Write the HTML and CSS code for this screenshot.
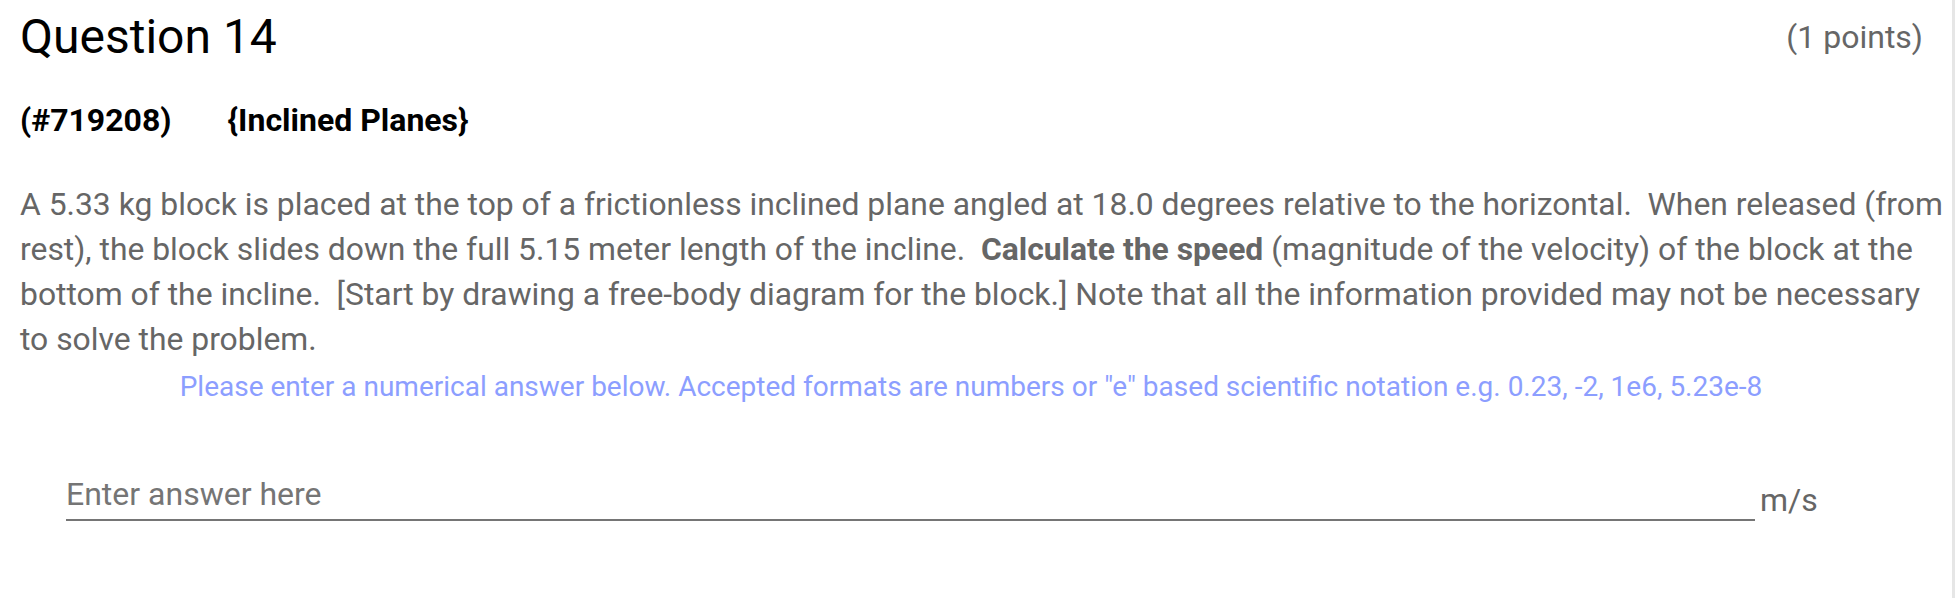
FILE: index.html
```html
<!DOCTYPE html>
<html lang="en">
<head>
<meta charset="utf-8">
<title>Question 14</title>
<link rel="stylesheet" href="styles.css">
</head>
<body>
<div class="page">
  <div class="question-header">
    <h1 class="question-title">Question 14</h1>
    <span class="question-points">(1 points)</span>
  </div>
  <div class="question-meta">
    <span class="meta-id">(#719208)</span>
    <span class="meta-topic">{Inclined Planes}</span>
  </div>
  <p class="question-text">A 5.33 kg block is placed at the top of a frictionless inclined plane angled at 18.0 degrees relative to the horizontal.&nbsp; When released (from rest), the block slides down the full 5.15 meter length of the incline.&nbsp; <b>Calculate the speed</b> (magnitude of the velocity) of the block at the bottom of the incline.&nbsp; [Start by drawing a free-body diagram for the block.] Note that all the information provided may not be necessary to solve the problem.</p>
  <p class="answer-hint">Please enter a numerical answer below. Accepted formats are numbers or "e" based scientific notation e.g. 0.23, -2, 1e6, 5.23e-8</p>
  <div class="answer-row">
    <input class="answer-input" type="text" placeholder="Enter answer here">
    <span class="answer-unit">m/s</span>
  </div>
</div>
</body>
</html>
```

FILE: styles.css
```css
html, body {
  margin: 0;
  padding: 0;
  background: #ffffff;
}

body {
  font-family: Roboto, "Noto Sans", sans-serif;
  color: #666666;
}

.page {
  box-sizing: border-box;
  width: 1955px;
  min-height: 598px;
  border-right: 3px solid #e6e6e6;
  padding: 9px 0 0 20px;
}

.question-header {
  display: flex;
  justify-content: space-between;
  align-items: center;
  padding-right: 29px;
}

.question-title {
  margin: 0;
  font-size: 48px;
  line-height: 56px;
  font-weight: 400;
  color: #000000;
}

.question-points {
  font-size: 32px;
  line-height: 36px;
  color: #666666;
}

.question-meta {
  display: flex;
  gap: 56px;
  margin-top: 37px;
  font-size: 32px;
  line-height: 36px;
  font-weight: 700;
  color: #000000;
}

.question-text {
  margin: 44px 0 0;
  font-size: 31.85px;
  line-height: 45px;
  color: #666666;
}

.question-text b {
  font-weight: 700;
}

.answer-hint {
  margin: 9px 0 0;
  padding-right: 30px;
  text-align: center;
  font-size: 28px;
  line-height: 32px;
  color: #8c9eff;
}

.answer-row {
  display: flex;
  align-items: flex-end;
  margin: 72px 0 0 46px;
}

.answer-input {
  box-sizing: content-box;
  width: 1689px;
  height: 38px;
  margin: 0;
  padding: 0 0 6px;
  border: none;
  border-bottom: 2px solid #757575;
  outline: none;
  background: transparent;
  font-family: Roboto, "Noto Sans", sans-serif;
  font-size: 32px;
  line-height: 38px;
  color: #333333;
}

.answer-input::placeholder {
  color: #757575;
  opacity: 1;
}

.answer-unit {
  margin-left: 5px;
  margin-bottom: 2px;
  font-size: 32px;
  line-height: 38px;
  color: #666666;
}
```
